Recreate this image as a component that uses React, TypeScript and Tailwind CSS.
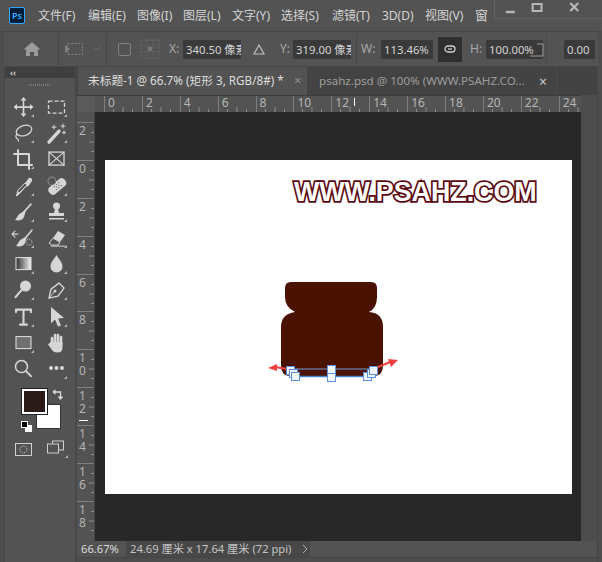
import { ReactNode } from "react"

const font = "[font-family:'Noto_Sans','Noto_Sans_CJK_SC',sans-serif]"
const ink = "#d6d6d6"

const menus = [
  { label: "文件(F)", width: "w-[50px]" },
  { label: "编辑(E)", width: "w-[49px]" },
  { label: "图像(I)", width: "w-[46px]" },
  { label: "图层(L)", width: "w-[49px]" },
  { label: "文字(Y)", width: "w-[49px]" },
  { label: "选择(S)", width: "w-[51px]" },
  { label: "滤镜(T)", width: "w-[50px]" },
  { label: "3D(D)", width: "w-[43px]" },
  { label: "视图(V)", width: "w-[50px]" },
]

const Tool = ({ children, corner = true }: { children: ReactNode; corner?: boolean }) => (
  <svg width="33" height="26.2" viewBox="0 0 33 26" className="block">
    {children}
    {corner && <path d="M27 20v3h-3z" fill="#b5b5b5" />}
  </svg>
)

const Line = (props: { d: string; w?: number }) => (
  <path d={props.d} fill="none" stroke={ink} strokeWidth={props.w ?? 1.4} strokeLinecap="round" strokeLinejoin="round" />
)

const Fill = ({ d }: { d: string }) => <path d={d} fill={ink} />

const tools: ReactNode[] = [
  <Tool key="move">
    <Line d="M16.5 5v16M8.5 13h16" w={1.6} />
    <Fill d="M16.5 3l3 3.5h-6zM16.5 23l3-3.5h-6zM6.5 13l3.5-3v6zM26.5 13l-3.5-3v6z" />
  </Tool>,
  <Tool key="marquee">
    <rect x="8.5" y="7" width="16" height="12" fill="none" stroke={ink} strokeWidth="1.3" strokeDasharray="4 2" />
  </Tool>,
  <Tool key="lasso">
    <ellipse cx="17" cy="10.5" rx="8" ry="5" transform="rotate(-18 17 10.5)" fill="none" stroke={ink} strokeWidth="1.3" />
    <Line d="M10 14c-2 2-1 4 0 4.5s2 1 1.5 2.5" w={1.2} />
  </Tool>,
  <Tool key="wand">
    <Line d="M9 22l10-11" w={3.4} />
    <Line d="M14 5v4M12 7h4M23 4v4M21 6h4M24 11v3M22.5 12.5h3" w={1} />
  </Tool>,
  <Tool key="crop">
    <Line d="M11 4v15h14M7 8h15v15" w={2} />
  </Tool>,
  <Tool key="frame" corner={false}>
    <rect x="9" y="6" width="15" height="13" fill="none" stroke={ink} strokeWidth="1.3" />
    <Line d="M9 6l15 13M24 6L9 19" w={1.1} />
  </Tool>,
  <Tool key="eyedropper">
    <Line d="M10 22l10-11" w={2.2} />
    <Line d="M20 11l3-4" w={4.4} />
    <path d="M10 20l1-3 7-7 2 2-7 7z" fill="#535353" stroke={ink} />
  </Tool>,
  <Tool key="heal">
    <g transform="rotate(-40 17 13)">
      <rect x="7" y="9" width="20" height="9" rx="4" fill={ink} />
      <path d="M14 11h1v1h-1zM17 11h1v1h-1zM20 11h1v1h-1zM14 15h1v1h-1zM17 15h1v1h-1zM20 15h1v1h-1zM15.5 13h1v1h-1zM18.5 13h1v1h-1z" fill="#535353" />
    </g>
    <circle cx="12" cy="8" r="4" fill="#535353" stroke={ink} strokeDasharray="1 1" />
  </Tool>,
  <Tool key="brush">
    <Line d="M14 16l10-11" w={1.6} />
    <Fill d="M19 11l-5 3c-3 1-4 5-6 7 4 1 8 0 9-3z" />
  </Tool>,
  <Tool key="stamp">
    <circle cx="16.5" cy="7" r="3.5" fill={ink} />
    <Fill d="M15 10h3l1 4h5v3H9v-3h5zM9 19h15v1.5H9z" />
  </Tool>,
  <Tool key="history">
    <Line d="M16 16l9-11" w={1.6} />
    <Fill d="M20 11l-5 3c-3 1-4 5-6 7 4 1 8 0 9-3z" />
    <Line d="M5 9l6 0M8 6l-3 3 3 3" w={1.1} />
    <circle cx="22" cy="17" r="3" fill="none" stroke={ink} strokeDasharray="1 1" />
  </Tool>,
  <Tool key="eraser">
    <Fill d="M18 6l7 4-5 7-7-4z" />
    <path d="M13 13l7 4-2 3h-6l-3-2z" fill="#535353" stroke={ink} />
    <Line d="M11 21h14" w={1} />
  </Tool>,
  <Tool key="gradient">
    <defs>
      <linearGradient id="grad" x1="0" x2="1">
        <stop offset="0" stopColor="#2f2f2f" />
        <stop offset="1" stopColor="#f2f2f2" />
      </linearGradient>
    </defs>
    <rect x="9" y="6.5" width="15" height="12" fill="url(#grad)" stroke="#e4e4e4" />
  </Tool>,
  <Tool key="drop">
    <Fill d="M16.5 4c2 4 6 7 6 11.5a6 6 0 0 1-12 0C10.5 11 14.5 8 16.5 4z" />
  </Tool>,
  <Tool key="dodge">
    <circle cx="18.5" cy="9" r="5.5" fill={ink} />
    <Line d="M14.5 13L8.5 20" w={2.2} />
  </Tool>,
  <Tool key="pen">
    <path d="M9 21l2-9 8-6 5 5-6 8z" fill="none" stroke={ink} strokeWidth="1.4" strokeLinejoin="round" />
    <Line d="M9 21l5-6" w={1} />
    <circle cx="15" cy="14" r="1.5" fill={ink} />
  </Tool>,
  <Tool key="type">
    <Line d="M9 8V5.5h15V8M16.5 5.5V20M13 20.5h7" w={2.1} />
  </Tool>,
  <Tool key="select">
    <Fill d="M11 3l13 11-6 .5 3 7-3 1-3-7-4 4z" />
  </Tool>,
  <Tool key="rect">
    <rect x="9" y="6.5" width="15" height="12" fill="#707070" stroke="#e4e4e4" />
  </Tool>,
  <Tool key="hand" corner={false}>
    <Line d="M12 8v6M15 5v8M18 5v8M21 7v8" w={2.6} />
    <Fill d="M10.5 12h12v6c0 3-2 4.5-5 4.5-3.5 0-5-1.5-6.5-4l-3-4 1.5-1.5z" />
  </Tool>,
  <Tool key="zoom" corner={false}>
    <circle cx="14.5" cy="10.5" r="6" fill="none" stroke={ink} strokeWidth="1.5" />
    <Line d="M19 15l5 5" w={2} />
  </Tool>,
  <Tool key="more">
    <circle cx="11" cy="12" r="2" fill={ink} />
    <circle cx="16.5" cy="12" r="2" fill={ink} />
    <circle cx="22" cy="12" r="2" fill={ink} />
  </Tool>,
]

const RulerTicksH = ({ width }: { width: number }) => (
  <svg width={width} height="6" viewBox={`0 0 ${width} 6`} className="block shrink-0">
    <path d="M9.5 3v3M19 1v5M28.5 3v3" stroke="#8d8d8d" />
  </svg>
)

const RulerTicksV = () => (
  <svg width="6" height="38" viewBox="0 0 6 38" className="block">
    <path d="M3 9.5h3M1 19h5M3 28.5h3" stroke="#8d8d8d" />
  </svg>
)

const hLabels = ["0", "2", "4", "6", "8", "10", "12", "14", "16", "18", "20", "22"]
const vLabels = ["2", "0", "2", "4", "6", "8", "10", "12", "14", "16", "18"]

const handles = [
  [286, 366],
  [289, 369],
  [291, 372],
  [327, 365],
  [327, 373],
  [363, 372],
  [367, 369],
  [369, 366],
]

const Field = ({ value, className }: { value: string; className: string }) => (
  <div className={`h-[19px] shrink-0 overflow-hidden whitespace-nowrap rounded-[1px] bg-[#3a3a3a] pl-[3px] text-[11.3px] leading-[19px] text-[#d4d4d4] ${className}`}>
    {value}
  </div>
)

const Sep = ({ className = "" }: { className?: string }) => (
  <div className={`h-[31px] w-px shrink-0 bg-[#464646] ${className}`} />
)

const Label = ({ text, className }: { text: string; className: string }) => (
  <span className={`shrink-0 text-[12px] text-[#a8a8a8] ${className}`}>{text}</span>
)

export default function App() {
  return (
    <div className={`flex h-[562px] w-[602px] flex-col overflow-hidden bg-[#4d4d4d] ${font}`}>
      {/* menu bar */}
      <div className="flex h-[31px] shrink-0 items-center bg-[#535353] pl-[9px]">
        <div className="flex h-[17px] w-[16px] shrink-0 items-center justify-center rounded-[2px] border border-[#31a8ff] bg-[#001e36] text-[9px] leading-none font-semibold text-[#31a8ff]">
          Ps
        </div>
        <div className="ml-[13px] flex items-center">
          {menus.map((m) => (
            <span key={m.label} className={`${m.width} shrink-0 text-[12px] whitespace-nowrap text-[#d4d4d4]`}>
              {m.label}
            </span>
          ))}
          <span className="w-[18px] shrink-0 text-[13px] text-[#d4d4d4]">窗</span>
        </div>
        <div className="-mt-[12px] ml-[1px] flex h-[19px] w-[110px] shrink-0 items-center rounded-bl-[3px] border-b border-l border-[#616161]">
          <svg width="110" height="18" viewBox="0 0 110 18" className="block">
            <path d="M11 12h9" stroke="#b8b8b8" strokeWidth="2.4" />
            <rect x="38" y="4" width="9" height="7" fill="none" stroke="#b8b8b8" strokeWidth="2" />
            <path d="M76 3l8 8M84 3l-8 8" stroke="#b8b8b8" strokeWidth="2.2" />
          </svg>
        </div>
      </div>

      {/* options bar */}
      <div className="mx-[4px] flex h-[36px] shrink-0 items-center border-y border-[#474747] bg-[#535353]">
        <div className="flex w-[19px] shrink-0" />
        <svg width="18" height="16" viewBox="0 0 18 16" className="shrink-0">
          <path d="M9 1L0.5 8.5h2.5V15h4v-4h4v4h4V8.5h2.5z" fill="#9b9b9b" />
        </svg>
        <Sep className="ml-[17px]" />
        <svg width="28" height="16" viewBox="0 0 28 16" className="ml-[2px] shrink-0">
          <rect x="6.5" y="2.5" width="15" height="11" fill="none" stroke="#808080" strokeDasharray="2 1.5" />
          <path d="M4 4l5 4-5 4z" fill="#808080" />
        </svg>
        <svg width="12" height="6" viewBox="0 0 12 6" className="ml-[2px] shrink-0">
          <path d="M2 1l4 3 4-3" fill="none" stroke="#6a6a6a" />
        </svg>
        <Sep className="ml-[3px]" />
        <div className="ml-[11px] h-[13px] w-[13px] shrink-0 rounded-[2px] border border-[#808080]" />
        <svg width="20" height="20" viewBox="0 0 20 20" className="ml-[9px] shrink-0">
          <path d="M1 1h18v18H1z" fill="none" stroke="#6c6c6c" strokeDasharray="2 1.5" />
          <path d="M1 7h18M1 13h18M7 1v18M13 1v18" stroke="#666" strokeDasharray="2 1.5" />
          <rect x="8" y="8" width="4" height="4" fill="#777" />
        </svg>
        <Label text="X:" className="ml-[9px] w-[14px]" />
        <Field value="340.50 像素" className="w-[58px]" />
        <svg width="12" height="11" viewBox="0 0 12 11" className="ml-[12px] shrink-0">
          <path d="M6 1L1 10h10z" fill="none" stroke="#c0c0c0" strokeWidth="1.2" />
        </svg>
        <Label text="Y:" className="ml-[15px] w-[13px]" />
        <Field value="319.00 像素" className="w-[58px]" />
        <Sep className="ml-[5px]" />
        <Label text="W:" className="ml-[4px] w-[20px]" />
        <Field value="113.46%" className="w-[52px]" />
        <div className="ml-[5px] flex h-[25px] w-[24px] shrink-0 items-center justify-center bg-[#2f2f2f]">
          <svg width="12" height="8" viewBox="0 0 12 8">
            <rect x="1" y="1" width="10" height="6" rx="3" fill="none" stroke="#d0d0d0" strokeWidth="1.3" />
            <path d="M4 4h4" stroke="#d0d0d0" strokeWidth="1.3" />
          </svg>
        </div>
        <Label text="H:" className="ml-[8px] w-[16px]" />
        <div className="relative">
          <Field value="100.00%" className="w-[57px]" />
          <svg width="15" height="14" viewBox="0 0 15 14" className="absolute top-[3px] right-[-1px]">
            <path d="M8 1h6v12H1" fill="none" stroke="#9a9a9a" />
          </svg>
        </div>
        <Sep className="ml-[3px] opacity-60" />
        <Field value="0.00" className="ml-[17px] w-[31px]" />
      </div>

      {/* main body */}
      <div className="flex min-h-0 flex-1">
        <div className="w-[5px] shrink-0 border-r border-[#474747] bg-[#4d4d4d]" />

        {/* tools */}
        <div className="flex w-[72px] shrink-0 flex-col border-r-2 border-[#484848] bg-[#535353]">
          <div className="flex h-[11px] items-center bg-[#3f3f3f] pl-[5px] text-[8px] leading-none font-bold text-[#d0d0d0]">‹‹</div>
          <div className="mx-auto mt-[6px] h-[2px] w-[22px] bg-[repeating-linear-gradient(90deg,#777_0_1px,transparent_1px_2px)]" />
          <div className="mt-[8px] grid grid-cols-[33px_33px] pl-[2px]">
            {tools}
          </div>

          {/* colours */}
          <div className="relative mt-[7px] h-[51px] w-full">
            <div className="absolute top-[15px] left-[31px] h-[25px] w-[25px] border border-[#333] bg-white" />
            <div className="absolute top-0 left-[17px] h-[25px] w-[25px] border-2 border-white bg-[#2a1a1a] outline outline-[#222]" />
            <svg width="12" height="12" viewBox="0 0 12 12" className="absolute top-0 left-[47px]">
              <path d="M1 3h7.5v7M1 3l2.5-2M1 3l2.5 2M8.5 10l-2-2.5M8.5 10l2-2.5" fill="none" stroke="#dcdcdc" strokeWidth="1.3" />
            </svg>
            <div className="absolute top-[36px] left-[20px] h-[7px] w-[7px] bg-white" />
            <div className="absolute top-[32px] left-[16px] h-[7px] w-[7px] border border-white bg-black" />
          </div>

          <div className="flex items-center">
            <svg width="17" height="13" viewBox="0 0 17 13" className="ml-[10px] shrink-0">
              <rect x="0.5" y="0.5" width="16" height="12" fill="none" stroke="#d0d0d0" />
              <circle cx="8.5" cy="6.5" r="3.5" fill="none" stroke="#d0d0d0" strokeDasharray="1 1" />
            </svg>
            <svg width="24" height="18" viewBox="0 0 24 18" className="ml-[15px] shrink-0">
              <rect x="5.5" y="1" width="11" height="9" fill="none" stroke="#d0d0d0" />
              <rect x="0.5" y="4" width="11" height="9" fill="#535353" stroke="#d0d0d0" />
              <path d="M21 15v3h-3z" fill="#b5b5b5" />
            </svg>
          </div>
        </div>

        {/* document */}
        <div className="flex w-[520px] shrink-0 flex-col">
          {/* tabs */}
          <div className="flex h-[28px] shrink-0 bg-[#434343] pl-[1px]">
            <div className="flex w-[229px] shrink-0 items-center bg-[#535353] pl-[10px] text-[11.7px] whitespace-nowrap text-[#dedede]">
              <span className="w-[206px] shrink-0">未标题-1 @ 66.7% (矩形 3, RGB/8#) *</span>
              <span className="text-[13px] text-[#8e8e8e]">×</span>
            </div>
            <div className="ml-[1px] flex w-[249px] shrink-0 items-center border-r border-[#4d4d4d] pl-[11px] text-[11.6px] whitespace-nowrap text-[#9d9d9d]">
              <span className="w-[220px] shrink-0">psahz.psd @ 100% (WWW.PSAHZ.CO...</span>
              <span className="text-[14px] text-[#c8c8c8]">×</span>
            </div>
          </div>

          {/* top ruler */}
          <div className="flex h-[17px] w-[504px] shrink-0 border-t border-[#3c3c3c] bg-[#535353]">
            <div className="h-full w-[18px] shrink-0 bg-[#5a5a5a]" />
            <div className="h-full w-[9px] shrink-0" />
            <div className="relative flex h-full w-[477px]">
              {hLabels.map((label) => (
                <div key={label} className="h-full w-[37.9px] shrink-0 border-l border-[#7e7e7e] pl-[3px] text-[12px] leading-[14px] text-[#b5b5b5]">
                  {label}
                </div>
              ))}
              <div className="h-full w-[22px] shrink-0 border-l border-[#7e7e7e] pl-[3px] text-[12px] leading-[14px] text-[#b5b5b5]">24</div>
              <div className="absolute top-[2px] left-[250px] h-[8px] w-px bg-white" />
              <div className="absolute bottom-0 left-0 flex">
                {hLabels.map((label) => (
                  <RulerTicksH key={label} width={37.9} />
                ))}
                <RulerTicksH width={22} />
              </div>
            </div>
          </div>

          <div className="flex min-h-0 flex-1">
            {/* left ruler */}
            <div className="relative w-[18px] shrink-0 border-r border-[#474747] bg-[#535353] pt-[10px]">
              {vLabels.map((label, i) => (
                <div key={i} className="relative h-[37.9px] border-t border-[#7e7e7e] pt-[1px] pl-[2px] text-[12px] leading-[13px] whitespace-pre-line text-[#b5b5b5]">
                  {label.split("").join("\n")}
                  <div className="absolute top-0 right-0">
                    <RulerTicksV />
                  </div>
                </div>
              ))}
              <div className="absolute top-[308px] left-[2px] h-px w-[9px] bg-white" />
            </div>

            {/* canvas */}
            <div className="w-[486px] shrink-0 bg-[#282828] pt-[48px] pl-[10px]">
              <div className="relative h-[334px] w-[467px] bg-white">
                <span className="absolute top-[17px] left-[189px] font-['Liberation_Sans',sans-serif] text-[26.8px] leading-[30px] font-bold whitespace-nowrap text-white [-webkit-text-stroke:3.5px_#5a0b12] [paint-order:stroke_fill]">
                  WWW.PSAHZ.COM
                </span>
                <svg width="140" height="110" viewBox="262 275 140 110" className="absolute top-[115px] left-[157px]">
                  <path
                    d="M291 282H371Q377 282 377 288V297Q377 308 369 312Q383 313 383 327V366Q383 376 373 376H291Q281 376 281 366V327Q281 314 295 312Q285 307 285 297V288Q285 282 291 282Z"
                    fill="#4a1200"
                  />
                  <path d="M292 376.5H370" stroke="#3f86d8" strokeWidth="1.6" />
                  <path d="M291 369H372" stroke="#6f9bdc" />
                  <path d="M287 369L275 367" stroke="#f04040" strokeWidth="2" />
                  <path d="M268 368l9-4v7z" fill="#f04040" />
                  <path d="M376 368L390 362" stroke="#f04040" strokeWidth="2" />
                  <path d="M398 360l-10-1 3 8z" fill="#f04040" />
                  {handles.map(([x, y]) => (
                    <rect key={`${x}-${y}`} x={x + 0.5} y={y + 0.5} width="8" height="8" fill="#f0f4fb" stroke="#5f90d8" />
                  ))}
                </svg>
              </div>
            </div>
          </div>

          {/* status bar */}
          <div className="flex h-[16px] shrink-0 items-center bg-[#535353] text-[11.2px] whitespace-nowrap">
            <span className="ml-[4px] w-[45px] shrink-0 text-[#dcdcdc]">66.67%</span>
            <div className="flex h-full w-[184px] shrink-0 items-center bg-[#484848] pl-[4px] text-[#c4c4c4]">
              <span className="w-[172px] shrink-0">24.69 厘米 x 17.64 厘米 (72 ppi)</span>
              <svg width="6" height="10" viewBox="0 0 6 10" className="shrink-0">
                <path d="M1 1l4 4-4 4" fill="none" stroke="#b0b0b0" />
              </svg>
            </div>
          </div>

          <div className="h-[5px] shrink-0 border-t border-[#454545] bg-[#4d4d4d]" />
        </div>

        <div className="w-[5px] shrink-0 border-l border-[#454545] bg-[#4d4d4d]" />
      </div>
    </div>
  )
}
